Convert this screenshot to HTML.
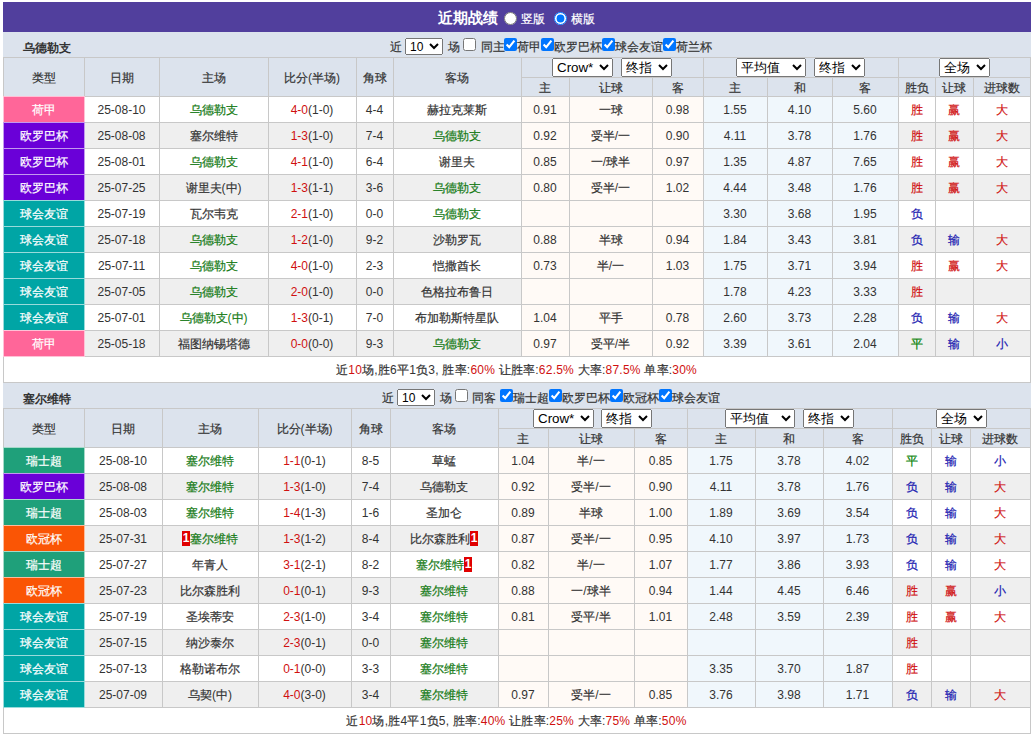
<!DOCTYPE html><html><head><meta charset="utf-8"><style>
html,body{margin:0;padding:0;background:#fff;}
body{width:1035px;height:734px;overflow:hidden;position:relative;font-family:'Liberation Sans', sans-serif;font-size:12px;color:#333333;}
div,select,input{position:absolute;box-sizing:border-box;}
.t{text-align:center;white-space:nowrap;}
select{margin:0;font-family:'Liberation Sans', sans-serif;font-size:13.33px;color:#000;}
input{margin:0;width:13px;height:13px;}
.g{color:#147a14;}
.r{color:#d01010;}
.b{color:#1818b0;}
.rg{color:#008000;}
b.c{font-weight:inherit;-webkit-text-stroke:0.2px currentColor;}
.one{display:inline-block;width:8px;height:15px;line-height:15px;vertical-align:1px;background:#e00000;color:#fff;font-weight:bold;text-align:center;}
</style></head><body>
<div style="left:3px;top:2px;width:1028px;height:30px;background:#513f9d"></div>
<div style="left:3px;top:32px;width:1028px;height:25px;background:#dce3ed"></div>
<div class="t" style="left:22.5px;top:36px;width:100px;height:25px;line-height:25px;font-weight:bold;text-align:left">乌德勒支</div>
<div class="t" style="left:389.5px;top:35px;width:80px;height:25px;line-height:25px;text-align:left;width:auto"><b class="c">近</b></div>
<select style="left:405px;top:38px;width:38px;height:17px;font-size:12px;padding-bottom:1px"><option>10</option></select>
<div class="t" style="left:447.5px;top:35px;width:80px;height:25px;line-height:25px;text-align:left;width:auto"><b class="c">场</b></div>
<input type="checkbox" style="left:463px;top:38px">
<div class="t" style="left:480.5px;top:35px;width:80px;height:25px;line-height:25px;text-align:left;width:auto"><b class="c">同主</b></div>
<input type="checkbox" style="left:504px;top:38px" checked>
<div class="t" style="left:516.5px;top:35px;width:80px;height:25px;line-height:25px;text-align:left;width:auto"><b class="c">荷甲</b></div>
<input type="checkbox" style="left:541px;top:38px" checked>
<div class="t" style="left:553.5px;top:35px;width:80px;height:25px;line-height:25px;text-align:left;width:auto"><b class="c">欧罗巴杯</b></div>
<input type="checkbox" style="left:602px;top:38px" checked>
<div class="t" style="left:614.5px;top:35px;width:80px;height:25px;line-height:25px;text-align:left;width:auto"><b class="c">球会友谊</b></div>
<input type="checkbox" style="left:663px;top:38px" checked>
<div class="t" style="left:675.5px;top:35px;width:80px;height:25px;line-height:25px;text-align:left;width:auto"><b class="c">荷兰杯</b></div>
<div style="left:3px;top:57px;width:1028px;height:40px;background:#dce3ed"></div>
<div style="left:3px;top:97px;width:1028px;height:25px;background:#ffffff"></div>
<div style="left:522px;top:97px;width:181px;height:25px;background:#fffaf6"></div>
<div style="left:704px;top:97px;width:194px;height:25px;background:#f0f7fc"></div>
<div style="left:4px;top:96px;width:81px;height:27px;background:#ff6699"></div>
<div style="left:3px;top:123px;width:1028px;height:25px;background:#efefef"></div>
<div style="left:522px;top:123px;width:181px;height:25px;background:#fffaf6"></div>
<div style="left:704px;top:123px;width:194px;height:25px;background:#f0f7fc"></div>
<div style="left:4px;top:122px;width:81px;height:27px;background:#6a00d8"></div>
<div style="left:3px;top:149px;width:1028px;height:25px;background:#ffffff"></div>
<div style="left:522px;top:149px;width:181px;height:25px;background:#fffaf6"></div>
<div style="left:704px;top:149px;width:194px;height:25px;background:#f0f7fc"></div>
<div style="left:4px;top:148px;width:81px;height:27px;background:#6a00d8"></div>
<div style="left:3px;top:175px;width:1028px;height:25px;background:#efefef"></div>
<div style="left:522px;top:175px;width:181px;height:25px;background:#fffaf6"></div>
<div style="left:704px;top:175px;width:194px;height:25px;background:#f0f7fc"></div>
<div style="left:4px;top:174px;width:81px;height:27px;background:#6a00d8"></div>
<div style="left:3px;top:201px;width:1028px;height:25px;background:#ffffff"></div>
<div style="left:522px;top:201px;width:181px;height:25px;background:#fffaf6"></div>
<div style="left:704px;top:201px;width:194px;height:25px;background:#f0f7fc"></div>
<div style="left:4px;top:200px;width:81px;height:27px;background:#00a5a5"></div>
<div style="left:3px;top:227px;width:1028px;height:25px;background:#efefef"></div>
<div style="left:522px;top:227px;width:181px;height:25px;background:#fffaf6"></div>
<div style="left:704px;top:227px;width:194px;height:25px;background:#f0f7fc"></div>
<div style="left:4px;top:226px;width:81px;height:27px;background:#00a5a5"></div>
<div style="left:3px;top:253px;width:1028px;height:25px;background:#ffffff"></div>
<div style="left:522px;top:253px;width:181px;height:25px;background:#fffaf6"></div>
<div style="left:704px;top:253px;width:194px;height:25px;background:#f0f7fc"></div>
<div style="left:4px;top:252px;width:81px;height:27px;background:#00a5a5"></div>
<div style="left:3px;top:279px;width:1028px;height:25px;background:#efefef"></div>
<div style="left:522px;top:279px;width:181px;height:25px;background:#fffaf6"></div>
<div style="left:704px;top:279px;width:194px;height:25px;background:#f0f7fc"></div>
<div style="left:4px;top:278px;width:81px;height:27px;background:#00a5a5"></div>
<div style="left:3px;top:305px;width:1028px;height:25px;background:#ffffff"></div>
<div style="left:522px;top:305px;width:181px;height:25px;background:#fffaf6"></div>
<div style="left:704px;top:305px;width:194px;height:25px;background:#f0f7fc"></div>
<div style="left:4px;top:304px;width:81px;height:27px;background:#00a5a5"></div>
<div style="left:3px;top:331px;width:1028px;height:25px;background:#efefef"></div>
<div style="left:522px;top:331px;width:181px;height:25px;background:#fffaf6"></div>
<div style="left:704px;top:331px;width:194px;height:25px;background:#f0f7fc"></div>
<div style="left:4px;top:330px;width:81px;height:27px;background:#ff6699"></div>
<div style="left:3px;top:57px;width:1028px;height:1px;background:#c8c8c8"></div>
<div style="left:3px;top:382px;width:1028px;height:1px;background:#c8c8c8"></div>
<div style="left:3px;top:96px;width:1028px;height:1px;background:#c8c8c8"></div>
<div style="left:521px;top:77px;width:509px;height:1px;background:#c8c8c8"></div>
<div style="left:3px;top:122px;width:1028px;height:1px;background:#c8c8c8"></div>
<div style="left:3px;top:148px;width:1028px;height:1px;background:#c8c8c8"></div>
<div style="left:3px;top:174px;width:1028px;height:1px;background:#c8c8c8"></div>
<div style="left:3px;top:200px;width:1028px;height:1px;background:#c8c8c8"></div>
<div style="left:3px;top:226px;width:1028px;height:1px;background:#c8c8c8"></div>
<div style="left:3px;top:252px;width:1028px;height:1px;background:#c8c8c8"></div>
<div style="left:3px;top:278px;width:1028px;height:1px;background:#c8c8c8"></div>
<div style="left:3px;top:304px;width:1028px;height:1px;background:#c8c8c8"></div>
<div style="left:3px;top:330px;width:1028px;height:1px;background:#c8c8c8"></div>
<div style="left:3px;top:356px;width:1028px;height:1px;background:#c8c8c8"></div>
<div style="left:3px;top:57px;width:1px;height:326px;background:#c8c8c8"></div>
<div style="left:84px;top:57px;width:1px;height:299px;background:#c8c8c8"></div>
<div style="left:159px;top:57px;width:1px;height:299px;background:#c8c8c8"></div>
<div style="left:268px;top:57px;width:1px;height:299px;background:#c8c8c8"></div>
<div style="left:356px;top:57px;width:1px;height:299px;background:#c8c8c8"></div>
<div style="left:393px;top:57px;width:1px;height:299px;background:#c8c8c8"></div>
<div style="left:521px;top:57px;width:1px;height:299px;background:#c8c8c8"></div>
<div style="left:569px;top:77px;width:1px;height:279px;background:#c8c8c8"></div>
<div style="left:652px;top:77px;width:1px;height:279px;background:#c8c8c8"></div>
<div style="left:703px;top:57px;width:1px;height:299px;background:#c8c8c8"></div>
<div style="left:767px;top:77px;width:1px;height:279px;background:#c8c8c8"></div>
<div style="left:832px;top:77px;width:1px;height:279px;background:#c8c8c8"></div>
<div style="left:898px;top:57px;width:1px;height:299px;background:#c8c8c8"></div>
<div style="left:935px;top:77px;width:1px;height:279px;background:#c8c8c8"></div>
<div style="left:973px;top:77px;width:1px;height:279px;background:#c8c8c8"></div>
<div style="left:1030px;top:57px;width:1px;height:326px;background:#c8c8c8"></div>
<div style="left:3px;top:96px;width:82px;height:1px;background:#ffc1d6"></div>
<div style="left:3px;top:96px;width:1px;height:27px;background:#ffc1d6"></div>
<div style="left:84px;top:96px;width:1px;height:27px;background:#ffc1d6"></div>
<div style="left:3px;top:122px;width:82px;height:1px;background:#c399ef"></div>
<div style="left:3px;top:122px;width:1px;height:27px;background:#c399ef"></div>
<div style="left:84px;top:122px;width:1px;height:27px;background:#c399ef"></div>
<div style="left:3px;top:148px;width:82px;height:1px;background:#c399ef"></div>
<div style="left:3px;top:148px;width:1px;height:27px;background:#c399ef"></div>
<div style="left:84px;top:148px;width:1px;height:27px;background:#c399ef"></div>
<div style="left:3px;top:174px;width:82px;height:1px;background:#c399ef"></div>
<div style="left:3px;top:174px;width:1px;height:27px;background:#c399ef"></div>
<div style="left:84px;top:174px;width:1px;height:27px;background:#c399ef"></div>
<div style="left:3px;top:200px;width:82px;height:1px;background:#99dbdb"></div>
<div style="left:3px;top:200px;width:1px;height:27px;background:#99dbdb"></div>
<div style="left:84px;top:200px;width:1px;height:27px;background:#99dbdb"></div>
<div style="left:3px;top:226px;width:82px;height:1px;background:#99dbdb"></div>
<div style="left:3px;top:226px;width:1px;height:27px;background:#99dbdb"></div>
<div style="left:84px;top:226px;width:1px;height:27px;background:#99dbdb"></div>
<div style="left:3px;top:252px;width:82px;height:1px;background:#99dbdb"></div>
<div style="left:3px;top:252px;width:1px;height:27px;background:#99dbdb"></div>
<div style="left:84px;top:252px;width:1px;height:27px;background:#99dbdb"></div>
<div style="left:3px;top:278px;width:82px;height:1px;background:#99dbdb"></div>
<div style="left:3px;top:278px;width:1px;height:27px;background:#99dbdb"></div>
<div style="left:84px;top:278px;width:1px;height:27px;background:#99dbdb"></div>
<div style="left:3px;top:304px;width:82px;height:1px;background:#99dbdb"></div>
<div style="left:3px;top:304px;width:1px;height:27px;background:#99dbdb"></div>
<div style="left:84px;top:304px;width:1px;height:27px;background:#99dbdb"></div>
<div style="left:3px;top:330px;width:82px;height:1px;background:#ffc1d6"></div>
<div style="left:3px;top:330px;width:1px;height:27px;background:#ffc1d6"></div>
<div style="left:84px;top:330px;width:1px;height:27px;background:#ffc1d6"></div>
<div style="left:3px;top:356px;width:82px;height:1px;background:#ffc1d6"></div>
<div class="t" style="left:3.5px;top:59px;width:80px;height:38px;line-height:38px;"><b class="c">类型</b></div>
<div class="t" style="left:84.5px;top:59px;width:74px;height:38px;line-height:38px;"><b class="c">日期</b></div>
<div class="t" style="left:159.5px;top:59px;width:108px;height:38px;line-height:38px;"><b class="c">主场</b></div>
<div class="t" style="left:268.5px;top:59px;width:87px;height:38px;line-height:38px;"><b class="c">比分</b>(<b class="c">半场</b>)</div>
<div class="t" style="left:356.5px;top:59px;width:36px;height:38px;line-height:38px;"><b class="c">角球</b></div>
<div class="t" style="left:393.5px;top:59px;width:127px;height:38px;line-height:38px;"><b class="c">客场</b></div>
<div class="t" style="left:521.5px;top:79px;width:47px;height:18px;line-height:18px;"><b class="c">主</b></div>
<div class="t" style="left:569.5px;top:79px;width:82px;height:18px;line-height:18px;"><b class="c">让球</b></div>
<div class="t" style="left:652.5px;top:79px;width:50px;height:18px;line-height:18px;"><b class="c">客</b></div>
<div class="t" style="left:703.5px;top:79px;width:63px;height:18px;line-height:18px;"><b class="c">主</b></div>
<div class="t" style="left:767.5px;top:79px;width:64px;height:18px;line-height:18px;"><b class="c">和</b></div>
<div class="t" style="left:832.5px;top:79px;width:65px;height:18px;line-height:18px;"><b class="c">客</b></div>
<div class="t" style="left:898.5px;top:79px;width:36px;height:18px;line-height:18px;"><b class="c">胜负</b></div>
<div class="t" style="left:935.5px;top:79px;width:37px;height:18px;line-height:18px;"><b class="c">让球</b></div>
<div class="t" style="left:973.5px;top:79px;width:56px;height:18px;line-height:18px;"><b class="c">进球数</b></div>
<div class="t" style="left:3.5px;top:98px;width:80px;height:25px;line-height:25px;color:#fff"><b class="c">荷甲</b></div>
<div class="t" style="left:84.5px;top:98px;width:74px;height:25px;line-height:25px;">25-08-10</div>
<div class="t" style="left:159.5px;top:98px;width:108px;height:25px;line-height:25px;"><span class="g"><b class="c">乌德勒支</b></span></div>
<div class="t" style="left:268.5px;top:98px;width:87px;height:25px;line-height:25px;"><span class="r">4-0</span>(1-0)</div>
<div class="t" style="left:356.5px;top:98px;width:36px;height:25px;line-height:25px;">4-4</div>
<div class="t" style="left:393.5px;top:98px;width:127px;height:25px;line-height:25px;"><b class="c">赫拉克莱斯</b></div>
<div class="t" style="left:521.5px;top:98px;width:47px;height:25px;line-height:25px;">0.91</div>
<div class="t" style="left:569.5px;top:98px;width:82px;height:25px;line-height:25px;"><b class="c">一球</b></div>
<div class="t" style="left:652.5px;top:98px;width:50px;height:25px;line-height:25px;">0.98</div>
<div class="t" style="left:703.5px;top:98px;width:63px;height:25px;line-height:25px;">1.55</div>
<div class="t" style="left:767.5px;top:98px;width:64px;height:25px;line-height:25px;">4.10</div>
<div class="t" style="left:832.5px;top:98px;width:65px;height:25px;line-height:25px;">5.60</div>
<div class="t" style="left:898.5px;top:98px;width:36px;height:25px;line-height:25px;"><span class="r"><b class="c">胜</b></span></div>
<div class="t" style="left:935.5px;top:98px;width:37px;height:25px;line-height:25px;"><span class="r"><b class="c">赢</b></span></div>
<div class="t" style="left:973.5px;top:98px;width:56px;height:25px;line-height:25px;"><span class="r"><b class="c">大</b></span></div>
<div class="t" style="left:3.5px;top:124px;width:80px;height:25px;line-height:25px;color:#fff"><b class="c">欧罗巴杯</b></div>
<div class="t" style="left:84.5px;top:124px;width:74px;height:25px;line-height:25px;">25-08-08</div>
<div class="t" style="left:159.5px;top:124px;width:108px;height:25px;line-height:25px;"><b class="c">塞尔维特</b></div>
<div class="t" style="left:268.5px;top:124px;width:87px;height:25px;line-height:25px;"><span class="r">1-3</span>(1-0)</div>
<div class="t" style="left:356.5px;top:124px;width:36px;height:25px;line-height:25px;">7-4</div>
<div class="t" style="left:393.5px;top:124px;width:127px;height:25px;line-height:25px;"><span class="g"><b class="c">乌德勒支</b></span></div>
<div class="t" style="left:521.5px;top:124px;width:47px;height:25px;line-height:25px;">0.92</div>
<div class="t" style="left:569.5px;top:124px;width:82px;height:25px;line-height:25px;"><b class="c">受半</b>/<b class="c">一</b></div>
<div class="t" style="left:652.5px;top:124px;width:50px;height:25px;line-height:25px;">0.90</div>
<div class="t" style="left:703.5px;top:124px;width:63px;height:25px;line-height:25px;">4.11</div>
<div class="t" style="left:767.5px;top:124px;width:64px;height:25px;line-height:25px;">3.78</div>
<div class="t" style="left:832.5px;top:124px;width:65px;height:25px;line-height:25px;">1.76</div>
<div class="t" style="left:898.5px;top:124px;width:36px;height:25px;line-height:25px;"><span class="r"><b class="c">胜</b></span></div>
<div class="t" style="left:935.5px;top:124px;width:37px;height:25px;line-height:25px;"><span class="r"><b class="c">赢</b></span></div>
<div class="t" style="left:973.5px;top:124px;width:56px;height:25px;line-height:25px;"><span class="r"><b class="c">大</b></span></div>
<div class="t" style="left:3.5px;top:150px;width:80px;height:25px;line-height:25px;color:#fff"><b class="c">欧罗巴杯</b></div>
<div class="t" style="left:84.5px;top:150px;width:74px;height:25px;line-height:25px;">25-08-01</div>
<div class="t" style="left:159.5px;top:150px;width:108px;height:25px;line-height:25px;"><span class="g"><b class="c">乌德勒支</b></span></div>
<div class="t" style="left:268.5px;top:150px;width:87px;height:25px;line-height:25px;"><span class="r">4-1</span>(1-0)</div>
<div class="t" style="left:356.5px;top:150px;width:36px;height:25px;line-height:25px;">6-4</div>
<div class="t" style="left:393.5px;top:150px;width:127px;height:25px;line-height:25px;"><b class="c">谢里夫</b></div>
<div class="t" style="left:521.5px;top:150px;width:47px;height:25px;line-height:25px;">0.85</div>
<div class="t" style="left:569.5px;top:150px;width:82px;height:25px;line-height:25px;"><b class="c">一</b>/<b class="c">球半</b></div>
<div class="t" style="left:652.5px;top:150px;width:50px;height:25px;line-height:25px;">0.97</div>
<div class="t" style="left:703.5px;top:150px;width:63px;height:25px;line-height:25px;">1.35</div>
<div class="t" style="left:767.5px;top:150px;width:64px;height:25px;line-height:25px;">4.87</div>
<div class="t" style="left:832.5px;top:150px;width:65px;height:25px;line-height:25px;">7.65</div>
<div class="t" style="left:898.5px;top:150px;width:36px;height:25px;line-height:25px;"><span class="r"><b class="c">胜</b></span></div>
<div class="t" style="left:935.5px;top:150px;width:37px;height:25px;line-height:25px;"><span class="r"><b class="c">赢</b></span></div>
<div class="t" style="left:973.5px;top:150px;width:56px;height:25px;line-height:25px;"><span class="r"><b class="c">大</b></span></div>
<div class="t" style="left:3.5px;top:176px;width:80px;height:25px;line-height:25px;color:#fff"><b class="c">欧罗巴杯</b></div>
<div class="t" style="left:84.5px;top:176px;width:74px;height:25px;line-height:25px;">25-07-25</div>
<div class="t" style="left:159.5px;top:176px;width:108px;height:25px;line-height:25px;"><b class="c">谢里夫</b>(<b class="c">中</b>)</div>
<div class="t" style="left:268.5px;top:176px;width:87px;height:25px;line-height:25px;"><span class="r">1-3</span>(1-1)</div>
<div class="t" style="left:356.5px;top:176px;width:36px;height:25px;line-height:25px;">3-6</div>
<div class="t" style="left:393.5px;top:176px;width:127px;height:25px;line-height:25px;"><span class="g"><b class="c">乌德勒支</b></span></div>
<div class="t" style="left:521.5px;top:176px;width:47px;height:25px;line-height:25px;">0.80</div>
<div class="t" style="left:569.5px;top:176px;width:82px;height:25px;line-height:25px;"><b class="c">受半</b>/<b class="c">一</b></div>
<div class="t" style="left:652.5px;top:176px;width:50px;height:25px;line-height:25px;">1.02</div>
<div class="t" style="left:703.5px;top:176px;width:63px;height:25px;line-height:25px;">4.44</div>
<div class="t" style="left:767.5px;top:176px;width:64px;height:25px;line-height:25px;">3.48</div>
<div class="t" style="left:832.5px;top:176px;width:65px;height:25px;line-height:25px;">1.76</div>
<div class="t" style="left:898.5px;top:176px;width:36px;height:25px;line-height:25px;"><span class="r"><b class="c">胜</b></span></div>
<div class="t" style="left:935.5px;top:176px;width:37px;height:25px;line-height:25px;"><span class="r"><b class="c">赢</b></span></div>
<div class="t" style="left:973.5px;top:176px;width:56px;height:25px;line-height:25px;"><span class="r"><b class="c">大</b></span></div>
<div class="t" style="left:3.5px;top:202px;width:80px;height:25px;line-height:25px;color:#fff"><b class="c">球会友谊</b></div>
<div class="t" style="left:84.5px;top:202px;width:74px;height:25px;line-height:25px;">25-07-19</div>
<div class="t" style="left:159.5px;top:202px;width:108px;height:25px;line-height:25px;"><b class="c">瓦尔韦克</b></div>
<div class="t" style="left:268.5px;top:202px;width:87px;height:25px;line-height:25px;"><span class="r">2-1</span>(1-0)</div>
<div class="t" style="left:356.5px;top:202px;width:36px;height:25px;line-height:25px;">0-0</div>
<div class="t" style="left:393.5px;top:202px;width:127px;height:25px;line-height:25px;"><span class="g"><b class="c">乌德勒支</b></span></div>
<div class="t" style="left:521.5px;top:202px;width:47px;height:25px;line-height:25px;"></div>
<div class="t" style="left:569.5px;top:202px;width:82px;height:25px;line-height:25px;"></div>
<div class="t" style="left:652.5px;top:202px;width:50px;height:25px;line-height:25px;"></div>
<div class="t" style="left:703.5px;top:202px;width:63px;height:25px;line-height:25px;">3.30</div>
<div class="t" style="left:767.5px;top:202px;width:64px;height:25px;line-height:25px;">3.68</div>
<div class="t" style="left:832.5px;top:202px;width:65px;height:25px;line-height:25px;">1.95</div>
<div class="t" style="left:898.5px;top:202px;width:36px;height:25px;line-height:25px;"><span class="b"><b class="c">负</b></span></div>
<div class="t" style="left:935.5px;top:202px;width:37px;height:25px;line-height:25px;"></div>
<div class="t" style="left:973.5px;top:202px;width:56px;height:25px;line-height:25px;"></div>
<div class="t" style="left:3.5px;top:228px;width:80px;height:25px;line-height:25px;color:#fff"><b class="c">球会友谊</b></div>
<div class="t" style="left:84.5px;top:228px;width:74px;height:25px;line-height:25px;">25-07-18</div>
<div class="t" style="left:159.5px;top:228px;width:108px;height:25px;line-height:25px;"><span class="g"><b class="c">乌德勒支</b></span></div>
<div class="t" style="left:268.5px;top:228px;width:87px;height:25px;line-height:25px;"><span class="r">1-2</span>(1-0)</div>
<div class="t" style="left:356.5px;top:228px;width:36px;height:25px;line-height:25px;">9-2</div>
<div class="t" style="left:393.5px;top:228px;width:127px;height:25px;line-height:25px;"><b class="c">沙勒罗瓦</b></div>
<div class="t" style="left:521.5px;top:228px;width:47px;height:25px;line-height:25px;">0.88</div>
<div class="t" style="left:569.5px;top:228px;width:82px;height:25px;line-height:25px;"><b class="c">半球</b></div>
<div class="t" style="left:652.5px;top:228px;width:50px;height:25px;line-height:25px;">0.94</div>
<div class="t" style="left:703.5px;top:228px;width:63px;height:25px;line-height:25px;">1.84</div>
<div class="t" style="left:767.5px;top:228px;width:64px;height:25px;line-height:25px;">3.43</div>
<div class="t" style="left:832.5px;top:228px;width:65px;height:25px;line-height:25px;">3.81</div>
<div class="t" style="left:898.5px;top:228px;width:36px;height:25px;line-height:25px;"><span class="b"><b class="c">负</b></span></div>
<div class="t" style="left:935.5px;top:228px;width:37px;height:25px;line-height:25px;"><span class="b"><b class="c">输</b></span></div>
<div class="t" style="left:973.5px;top:228px;width:56px;height:25px;line-height:25px;"><span class="r"><b class="c">大</b></span></div>
<div class="t" style="left:3.5px;top:254px;width:80px;height:25px;line-height:25px;color:#fff"><b class="c">球会友谊</b></div>
<div class="t" style="left:84.5px;top:254px;width:74px;height:25px;line-height:25px;">25-07-11</div>
<div class="t" style="left:159.5px;top:254px;width:108px;height:25px;line-height:25px;"><span class="g"><b class="c">乌德勒支</b></span></div>
<div class="t" style="left:268.5px;top:254px;width:87px;height:25px;line-height:25px;"><span class="r">4-0</span>(1-0)</div>
<div class="t" style="left:356.5px;top:254px;width:36px;height:25px;line-height:25px;">2-3</div>
<div class="t" style="left:393.5px;top:254px;width:127px;height:25px;line-height:25px;"><b class="c">恺撒酋长</b></div>
<div class="t" style="left:521.5px;top:254px;width:47px;height:25px;line-height:25px;">0.73</div>
<div class="t" style="left:569.5px;top:254px;width:82px;height:25px;line-height:25px;"><b class="c">半</b>/<b class="c">一</b></div>
<div class="t" style="left:652.5px;top:254px;width:50px;height:25px;line-height:25px;">1.03</div>
<div class="t" style="left:703.5px;top:254px;width:63px;height:25px;line-height:25px;">1.75</div>
<div class="t" style="left:767.5px;top:254px;width:64px;height:25px;line-height:25px;">3.71</div>
<div class="t" style="left:832.5px;top:254px;width:65px;height:25px;line-height:25px;">3.94</div>
<div class="t" style="left:898.5px;top:254px;width:36px;height:25px;line-height:25px;"><span class="r"><b class="c">胜</b></span></div>
<div class="t" style="left:935.5px;top:254px;width:37px;height:25px;line-height:25px;"><span class="r"><b class="c">赢</b></span></div>
<div class="t" style="left:973.5px;top:254px;width:56px;height:25px;line-height:25px;"><span class="r"><b class="c">大</b></span></div>
<div class="t" style="left:3.5px;top:280px;width:80px;height:25px;line-height:25px;color:#fff"><b class="c">球会友谊</b></div>
<div class="t" style="left:84.5px;top:280px;width:74px;height:25px;line-height:25px;">25-07-05</div>
<div class="t" style="left:159.5px;top:280px;width:108px;height:25px;line-height:25px;"><span class="g"><b class="c">乌德勒支</b></span></div>
<div class="t" style="left:268.5px;top:280px;width:87px;height:25px;line-height:25px;"><span class="r">2-0</span>(1-0)</div>
<div class="t" style="left:356.5px;top:280px;width:36px;height:25px;line-height:25px;">0-0</div>
<div class="t" style="left:393.5px;top:280px;width:127px;height:25px;line-height:25px;"><b class="c">色格拉布鲁日</b></div>
<div class="t" style="left:521.5px;top:280px;width:47px;height:25px;line-height:25px;"></div>
<div class="t" style="left:569.5px;top:280px;width:82px;height:25px;line-height:25px;"></div>
<div class="t" style="left:652.5px;top:280px;width:50px;height:25px;line-height:25px;"></div>
<div class="t" style="left:703.5px;top:280px;width:63px;height:25px;line-height:25px;">1.78</div>
<div class="t" style="left:767.5px;top:280px;width:64px;height:25px;line-height:25px;">4.23</div>
<div class="t" style="left:832.5px;top:280px;width:65px;height:25px;line-height:25px;">3.33</div>
<div class="t" style="left:898.5px;top:280px;width:36px;height:25px;line-height:25px;"><span class="r"><b class="c">胜</b></span></div>
<div class="t" style="left:935.5px;top:280px;width:37px;height:25px;line-height:25px;"></div>
<div class="t" style="left:973.5px;top:280px;width:56px;height:25px;line-height:25px;"></div>
<div class="t" style="left:3.5px;top:306px;width:80px;height:25px;line-height:25px;color:#fff"><b class="c">球会友谊</b></div>
<div class="t" style="left:84.5px;top:306px;width:74px;height:25px;line-height:25px;">25-07-01</div>
<div class="t" style="left:159.5px;top:306px;width:108px;height:25px;line-height:25px;"><span class="g"><b class="c">乌德勒支</b>(<b class="c">中</b>)</span></div>
<div class="t" style="left:268.5px;top:306px;width:87px;height:25px;line-height:25px;"><span class="r">1-3</span>(0-1)</div>
<div class="t" style="left:356.5px;top:306px;width:36px;height:25px;line-height:25px;">7-0</div>
<div class="t" style="left:393.5px;top:306px;width:127px;height:25px;line-height:25px;"><b class="c">布加勒斯特星队</b></div>
<div class="t" style="left:521.5px;top:306px;width:47px;height:25px;line-height:25px;">1.04</div>
<div class="t" style="left:569.5px;top:306px;width:82px;height:25px;line-height:25px;"><b class="c">平手</b></div>
<div class="t" style="left:652.5px;top:306px;width:50px;height:25px;line-height:25px;">0.78</div>
<div class="t" style="left:703.5px;top:306px;width:63px;height:25px;line-height:25px;">2.60</div>
<div class="t" style="left:767.5px;top:306px;width:64px;height:25px;line-height:25px;">3.73</div>
<div class="t" style="left:832.5px;top:306px;width:65px;height:25px;line-height:25px;">2.28</div>
<div class="t" style="left:898.5px;top:306px;width:36px;height:25px;line-height:25px;"><span class="b"><b class="c">负</b></span></div>
<div class="t" style="left:935.5px;top:306px;width:37px;height:25px;line-height:25px;"><span class="b"><b class="c">输</b></span></div>
<div class="t" style="left:973.5px;top:306px;width:56px;height:25px;line-height:25px;"><span class="r"><b class="c">大</b></span></div>
<div class="t" style="left:3.5px;top:332px;width:80px;height:25px;line-height:25px;color:#fff"><b class="c">荷甲</b></div>
<div class="t" style="left:84.5px;top:332px;width:74px;height:25px;line-height:25px;">25-05-18</div>
<div class="t" style="left:159.5px;top:332px;width:108px;height:25px;line-height:25px;"><b class="c">福图纳锡塔德</b></div>
<div class="t" style="left:268.5px;top:332px;width:87px;height:25px;line-height:25px;"><span class="r">0-0</span>(0-0)</div>
<div class="t" style="left:356.5px;top:332px;width:36px;height:25px;line-height:25px;">9-3</div>
<div class="t" style="left:393.5px;top:332px;width:127px;height:25px;line-height:25px;"><span class="g"><b class="c">乌德勒支</b></span></div>
<div class="t" style="left:521.5px;top:332px;width:47px;height:25px;line-height:25px;">0.97</div>
<div class="t" style="left:569.5px;top:332px;width:82px;height:25px;line-height:25px;"><b class="c">受平</b>/<b class="c">半</b></div>
<div class="t" style="left:652.5px;top:332px;width:50px;height:25px;line-height:25px;">0.92</div>
<div class="t" style="left:703.5px;top:332px;width:63px;height:25px;line-height:25px;">3.39</div>
<div class="t" style="left:767.5px;top:332px;width:64px;height:25px;line-height:25px;">3.61</div>
<div class="t" style="left:832.5px;top:332px;width:65px;height:25px;line-height:25px;">2.04</div>
<div class="t" style="left:898.5px;top:332px;width:36px;height:25px;line-height:25px;"><span class="rg"><b class="c">平</b></span></div>
<div class="t" style="left:935.5px;top:332px;width:37px;height:25px;line-height:25px;"><span class="b"><b class="c">输</b></span></div>
<div class="t" style="left:973.5px;top:332px;width:56px;height:25px;line-height:25px;"><span class="b"><b class="c">小</b></span></div>
<select style="left:552px;top:58px;width:61px;height:19px;"><option>Crow*</option></select>
<select style="left:621px;top:58px;width:51px;height:19px;"><option>终指</option></select>
<select style="left:736px;top:58px;width:70px;height:19px;"><option>平均值</option></select>
<select style="left:814px;top:58px;width:51px;height:19px;"><option>终指</option></select>
<select style="left:939px;top:58px;width:51px;height:19px;"><option>全场</option></select>
<div class="t" style="left:3.5px;top:358px;width:1026px;height:25px;line-height:25px;letter-spacing:0.22px"><b class="c">近</b><span class="r">10</span><b class="c">场</b>,<b class="c">胜</b>6<b class="c">平</b>1<b class="c">负</b>3, <b class="c">胜率</b>:<span class="r">60%</span> <b class="c">让胜率</b>:<span class="r">62.5%</span> <b class="c">大率</b>:<span class="r">87.5%</span> <b class="c">单率</b>:<span class="r">30%</span></div>
<div style="left:3px;top:383px;width:1028px;height:25px;background:#dce3ed"></div>
<div class="t" style="left:22.5px;top:387px;width:100px;height:25px;line-height:25px;font-weight:bold;text-align:left">塞尔维特</div>
<div class="t" style="left:381.5px;top:386px;width:80px;height:25px;line-height:25px;text-align:left;width:auto"><b class="c">近</b></div>
<select style="left:397px;top:389px;width:38px;height:17px;font-size:12px;padding-bottom:1px"><option>10</option></select>
<div class="t" style="left:439.5px;top:386px;width:80px;height:25px;line-height:25px;text-align:left;width:auto"><b class="c">场</b></div>
<input type="checkbox" style="left:455px;top:389px">
<div class="t" style="left:471.5px;top:386px;width:80px;height:25px;line-height:25px;text-align:left;width:auto"><b class="c">同客</b></div>
<input type="checkbox" style="left:500px;top:389px" checked>
<div class="t" style="left:512.5px;top:386px;width:80px;height:25px;line-height:25px;text-align:left;width:auto"><b class="c">瑞士超</b></div>
<input type="checkbox" style="left:549px;top:389px" checked>
<div class="t" style="left:561.5px;top:386px;width:80px;height:25px;line-height:25px;text-align:left;width:auto"><b class="c">欧罗巴杯</b></div>
<input type="checkbox" style="left:610px;top:389px" checked>
<div class="t" style="left:622.5px;top:386px;width:80px;height:25px;line-height:25px;text-align:left;width:auto"><b class="c">欧冠杯</b></div>
<input type="checkbox" style="left:659px;top:389px" checked>
<div class="t" style="left:671.5px;top:386px;width:80px;height:25px;line-height:25px;text-align:left;width:auto"><b class="c">球会友谊</b></div>
<div style="left:3px;top:408px;width:1028px;height:40px;background:#dce3ed"></div>
<div style="left:3px;top:448px;width:1028px;height:25px;background:#ffffff"></div>
<div style="left:499px;top:448px;width:188px;height:25px;background:#fffaf6"></div>
<div style="left:688px;top:448px;width:204px;height:25px;background:#f0f7fc"></div>
<div style="left:4px;top:447px;width:81px;height:27px;background:#1fa07a"></div>
<div style="left:3px;top:474px;width:1028px;height:25px;background:#efefef"></div>
<div style="left:499px;top:474px;width:188px;height:25px;background:#fffaf6"></div>
<div style="left:688px;top:474px;width:204px;height:25px;background:#f0f7fc"></div>
<div style="left:4px;top:473px;width:81px;height:27px;background:#6a00d8"></div>
<div style="left:3px;top:500px;width:1028px;height:25px;background:#ffffff"></div>
<div style="left:499px;top:500px;width:188px;height:25px;background:#fffaf6"></div>
<div style="left:688px;top:500px;width:204px;height:25px;background:#f0f7fc"></div>
<div style="left:4px;top:499px;width:81px;height:27px;background:#1fa07a"></div>
<div style="left:3px;top:526px;width:1028px;height:25px;background:#efefef"></div>
<div style="left:499px;top:526px;width:188px;height:25px;background:#fffaf6"></div>
<div style="left:688px;top:526px;width:204px;height:25px;background:#f0f7fc"></div>
<div style="left:4px;top:525px;width:81px;height:27px;background:#fa5505"></div>
<div style="left:3px;top:552px;width:1028px;height:25px;background:#ffffff"></div>
<div style="left:499px;top:552px;width:188px;height:25px;background:#fffaf6"></div>
<div style="left:688px;top:552px;width:204px;height:25px;background:#f0f7fc"></div>
<div style="left:4px;top:551px;width:81px;height:27px;background:#1fa07a"></div>
<div style="left:3px;top:578px;width:1028px;height:25px;background:#efefef"></div>
<div style="left:499px;top:578px;width:188px;height:25px;background:#fffaf6"></div>
<div style="left:688px;top:578px;width:204px;height:25px;background:#f0f7fc"></div>
<div style="left:4px;top:577px;width:81px;height:27px;background:#fa5505"></div>
<div style="left:3px;top:604px;width:1028px;height:25px;background:#ffffff"></div>
<div style="left:499px;top:604px;width:188px;height:25px;background:#fffaf6"></div>
<div style="left:688px;top:604px;width:204px;height:25px;background:#f0f7fc"></div>
<div style="left:4px;top:603px;width:81px;height:27px;background:#00a5a5"></div>
<div style="left:3px;top:630px;width:1028px;height:25px;background:#efefef"></div>
<div style="left:499px;top:630px;width:188px;height:25px;background:#fffaf6"></div>
<div style="left:688px;top:630px;width:204px;height:25px;background:#f0f7fc"></div>
<div style="left:4px;top:629px;width:81px;height:27px;background:#00a5a5"></div>
<div style="left:3px;top:656px;width:1028px;height:25px;background:#ffffff"></div>
<div style="left:499px;top:656px;width:188px;height:25px;background:#fffaf6"></div>
<div style="left:688px;top:656px;width:204px;height:25px;background:#f0f7fc"></div>
<div style="left:4px;top:655px;width:81px;height:27px;background:#00a5a5"></div>
<div style="left:3px;top:682px;width:1028px;height:25px;background:#efefef"></div>
<div style="left:499px;top:682px;width:188px;height:25px;background:#fffaf6"></div>
<div style="left:688px;top:682px;width:204px;height:25px;background:#f0f7fc"></div>
<div style="left:4px;top:681px;width:81px;height:27px;background:#00a5a5"></div>
<div style="left:3px;top:408px;width:1028px;height:1px;background:#c8c8c8"></div>
<div style="left:3px;top:733px;width:1028px;height:1px;background:#c8c8c8"></div>
<div style="left:3px;top:447px;width:1028px;height:1px;background:#c8c8c8"></div>
<div style="left:498px;top:428px;width:532px;height:1px;background:#c8c8c8"></div>
<div style="left:3px;top:473px;width:1028px;height:1px;background:#c8c8c8"></div>
<div style="left:3px;top:499px;width:1028px;height:1px;background:#c8c8c8"></div>
<div style="left:3px;top:525px;width:1028px;height:1px;background:#c8c8c8"></div>
<div style="left:3px;top:551px;width:1028px;height:1px;background:#c8c8c8"></div>
<div style="left:3px;top:577px;width:1028px;height:1px;background:#c8c8c8"></div>
<div style="left:3px;top:603px;width:1028px;height:1px;background:#c8c8c8"></div>
<div style="left:3px;top:629px;width:1028px;height:1px;background:#c8c8c8"></div>
<div style="left:3px;top:655px;width:1028px;height:1px;background:#c8c8c8"></div>
<div style="left:3px;top:681px;width:1028px;height:1px;background:#c8c8c8"></div>
<div style="left:3px;top:707px;width:1028px;height:1px;background:#c8c8c8"></div>
<div style="left:3px;top:408px;width:1px;height:326px;background:#c8c8c8"></div>
<div style="left:84px;top:408px;width:1px;height:299px;background:#c8c8c8"></div>
<div style="left:162px;top:408px;width:1px;height:299px;background:#c8c8c8"></div>
<div style="left:258px;top:408px;width:1px;height:299px;background:#c8c8c8"></div>
<div style="left:351px;top:408px;width:1px;height:299px;background:#c8c8c8"></div>
<div style="left:390px;top:408px;width:1px;height:299px;background:#c8c8c8"></div>
<div style="left:498px;top:408px;width:1px;height:299px;background:#c8c8c8"></div>
<div style="left:548px;top:428px;width:1px;height:279px;background:#c8c8c8"></div>
<div style="left:634px;top:428px;width:1px;height:279px;background:#c8c8c8"></div>
<div style="left:687px;top:408px;width:1px;height:299px;background:#c8c8c8"></div>
<div style="left:755px;top:428px;width:1px;height:279px;background:#c8c8c8"></div>
<div style="left:823px;top:428px;width:1px;height:279px;background:#c8c8c8"></div>
<div style="left:892px;top:408px;width:1px;height:299px;background:#c8c8c8"></div>
<div style="left:931px;top:428px;width:1px;height:279px;background:#c8c8c8"></div>
<div style="left:970px;top:428px;width:1px;height:279px;background:#c8c8c8"></div>
<div style="left:1030px;top:408px;width:1px;height:326px;background:#c8c8c8"></div>
<div style="left:3px;top:447px;width:82px;height:1px;background:#a5d9c9"></div>
<div style="left:3px;top:447px;width:1px;height:27px;background:#a5d9c9"></div>
<div style="left:84px;top:447px;width:1px;height:27px;background:#a5d9c9"></div>
<div style="left:3px;top:473px;width:82px;height:1px;background:#c399ef"></div>
<div style="left:3px;top:473px;width:1px;height:27px;background:#c399ef"></div>
<div style="left:84px;top:473px;width:1px;height:27px;background:#c399ef"></div>
<div style="left:3px;top:499px;width:82px;height:1px;background:#a5d9c9"></div>
<div style="left:3px;top:499px;width:1px;height:27px;background:#a5d9c9"></div>
<div style="left:84px;top:499px;width:1px;height:27px;background:#a5d9c9"></div>
<div style="left:3px;top:525px;width:82px;height:1px;background:#fdbb9b"></div>
<div style="left:3px;top:525px;width:1px;height:27px;background:#fdbb9b"></div>
<div style="left:84px;top:525px;width:1px;height:27px;background:#fdbb9b"></div>
<div style="left:3px;top:551px;width:82px;height:1px;background:#a5d9c9"></div>
<div style="left:3px;top:551px;width:1px;height:27px;background:#a5d9c9"></div>
<div style="left:84px;top:551px;width:1px;height:27px;background:#a5d9c9"></div>
<div style="left:3px;top:577px;width:82px;height:1px;background:#fdbb9b"></div>
<div style="left:3px;top:577px;width:1px;height:27px;background:#fdbb9b"></div>
<div style="left:84px;top:577px;width:1px;height:27px;background:#fdbb9b"></div>
<div style="left:3px;top:603px;width:82px;height:1px;background:#99dbdb"></div>
<div style="left:3px;top:603px;width:1px;height:27px;background:#99dbdb"></div>
<div style="left:84px;top:603px;width:1px;height:27px;background:#99dbdb"></div>
<div style="left:3px;top:629px;width:82px;height:1px;background:#99dbdb"></div>
<div style="left:3px;top:629px;width:1px;height:27px;background:#99dbdb"></div>
<div style="left:84px;top:629px;width:1px;height:27px;background:#99dbdb"></div>
<div style="left:3px;top:655px;width:82px;height:1px;background:#99dbdb"></div>
<div style="left:3px;top:655px;width:1px;height:27px;background:#99dbdb"></div>
<div style="left:84px;top:655px;width:1px;height:27px;background:#99dbdb"></div>
<div style="left:3px;top:681px;width:82px;height:1px;background:#99dbdb"></div>
<div style="left:3px;top:681px;width:1px;height:27px;background:#99dbdb"></div>
<div style="left:84px;top:681px;width:1px;height:27px;background:#99dbdb"></div>
<div style="left:3px;top:707px;width:82px;height:1px;background:#99dbdb"></div>
<div class="t" style="left:3.5px;top:410px;width:80px;height:38px;line-height:38px;"><b class="c">类型</b></div>
<div class="t" style="left:84.5px;top:410px;width:77px;height:38px;line-height:38px;"><b class="c">日期</b></div>
<div class="t" style="left:162.5px;top:410px;width:95px;height:38px;line-height:38px;"><b class="c">主场</b></div>
<div class="t" style="left:258.5px;top:410px;width:92px;height:38px;line-height:38px;"><b class="c">比分</b>(<b class="c">半场</b>)</div>
<div class="t" style="left:351.5px;top:410px;width:38px;height:38px;line-height:38px;"><b class="c">角球</b></div>
<div class="t" style="left:390.5px;top:410px;width:107px;height:38px;line-height:38px;"><b class="c">客场</b></div>
<div class="t" style="left:498.5px;top:430px;width:49px;height:18px;line-height:18px;"><b class="c">主</b></div>
<div class="t" style="left:548.5px;top:430px;width:85px;height:18px;line-height:18px;"><b class="c">让球</b></div>
<div class="t" style="left:634.5px;top:430px;width:52px;height:18px;line-height:18px;"><b class="c">客</b></div>
<div class="t" style="left:687.5px;top:430px;width:67px;height:18px;line-height:18px;"><b class="c">主</b></div>
<div class="t" style="left:755.5px;top:430px;width:67px;height:18px;line-height:18px;"><b class="c">和</b></div>
<div class="t" style="left:823.5px;top:430px;width:68px;height:18px;line-height:18px;"><b class="c">客</b></div>
<div class="t" style="left:892.5px;top:430px;width:38px;height:18px;line-height:18px;"><b class="c">胜负</b></div>
<div class="t" style="left:931.5px;top:430px;width:38px;height:18px;line-height:18px;"><b class="c">让球</b></div>
<div class="t" style="left:970.5px;top:430px;width:59px;height:18px;line-height:18px;"><b class="c">进球数</b></div>
<div class="t" style="left:3.5px;top:449px;width:80px;height:25px;line-height:25px;color:#fff"><b class="c">瑞士超</b></div>
<div class="t" style="left:84.5px;top:449px;width:77px;height:25px;line-height:25px;">25-08-10</div>
<div class="t" style="left:162.5px;top:449px;width:95px;height:25px;line-height:25px;"><span class="g"><b class="c">塞尔维特</b></span></div>
<div class="t" style="left:258.5px;top:449px;width:92px;height:25px;line-height:25px;"><span class="r">1-1</span>(0-1)</div>
<div class="t" style="left:351.5px;top:449px;width:38px;height:25px;line-height:25px;">8-5</div>
<div class="t" style="left:390.5px;top:449px;width:107px;height:25px;line-height:25px;"><b class="c">草蜢</b></div>
<div class="t" style="left:498.5px;top:449px;width:49px;height:25px;line-height:25px;">1.04</div>
<div class="t" style="left:548.5px;top:449px;width:85px;height:25px;line-height:25px;"><b class="c">半</b>/<b class="c">一</b></div>
<div class="t" style="left:634.5px;top:449px;width:52px;height:25px;line-height:25px;">0.85</div>
<div class="t" style="left:687.5px;top:449px;width:67px;height:25px;line-height:25px;">1.75</div>
<div class="t" style="left:755.5px;top:449px;width:67px;height:25px;line-height:25px;">3.78</div>
<div class="t" style="left:823.5px;top:449px;width:68px;height:25px;line-height:25px;">4.02</div>
<div class="t" style="left:892.5px;top:449px;width:38px;height:25px;line-height:25px;"><span class="rg"><b class="c">平</b></span></div>
<div class="t" style="left:931.5px;top:449px;width:38px;height:25px;line-height:25px;"><span class="b"><b class="c">输</b></span></div>
<div class="t" style="left:970.5px;top:449px;width:59px;height:25px;line-height:25px;"><span class="b"><b class="c">小</b></span></div>
<div class="t" style="left:3.5px;top:475px;width:80px;height:25px;line-height:25px;color:#fff"><b class="c">欧罗巴杯</b></div>
<div class="t" style="left:84.5px;top:475px;width:77px;height:25px;line-height:25px;">25-08-08</div>
<div class="t" style="left:162.5px;top:475px;width:95px;height:25px;line-height:25px;"><span class="g"><b class="c">塞尔维特</b></span></div>
<div class="t" style="left:258.5px;top:475px;width:92px;height:25px;line-height:25px;"><span class="r">1-3</span>(1-0)</div>
<div class="t" style="left:351.5px;top:475px;width:38px;height:25px;line-height:25px;">7-4</div>
<div class="t" style="left:390.5px;top:475px;width:107px;height:25px;line-height:25px;"><b class="c">乌德勒支</b></div>
<div class="t" style="left:498.5px;top:475px;width:49px;height:25px;line-height:25px;">0.92</div>
<div class="t" style="left:548.5px;top:475px;width:85px;height:25px;line-height:25px;"><b class="c">受半</b>/<b class="c">一</b></div>
<div class="t" style="left:634.5px;top:475px;width:52px;height:25px;line-height:25px;">0.90</div>
<div class="t" style="left:687.5px;top:475px;width:67px;height:25px;line-height:25px;">4.11</div>
<div class="t" style="left:755.5px;top:475px;width:67px;height:25px;line-height:25px;">3.78</div>
<div class="t" style="left:823.5px;top:475px;width:68px;height:25px;line-height:25px;">1.76</div>
<div class="t" style="left:892.5px;top:475px;width:38px;height:25px;line-height:25px;"><span class="b"><b class="c">负</b></span></div>
<div class="t" style="left:931.5px;top:475px;width:38px;height:25px;line-height:25px;"><span class="b"><b class="c">输</b></span></div>
<div class="t" style="left:970.5px;top:475px;width:59px;height:25px;line-height:25px;"><span class="r"><b class="c">大</b></span></div>
<div class="t" style="left:3.5px;top:501px;width:80px;height:25px;line-height:25px;color:#fff"><b class="c">瑞士超</b></div>
<div class="t" style="left:84.5px;top:501px;width:77px;height:25px;line-height:25px;">25-08-03</div>
<div class="t" style="left:162.5px;top:501px;width:95px;height:25px;line-height:25px;"><span class="g"><b class="c">塞尔维特</b></span></div>
<div class="t" style="left:258.5px;top:501px;width:92px;height:25px;line-height:25px;"><span class="r">1-4</span>(1-3)</div>
<div class="t" style="left:351.5px;top:501px;width:38px;height:25px;line-height:25px;">1-6</div>
<div class="t" style="left:390.5px;top:501px;width:107px;height:25px;line-height:25px;"><b class="c">圣加仑</b></div>
<div class="t" style="left:498.5px;top:501px;width:49px;height:25px;line-height:25px;">0.89</div>
<div class="t" style="left:548.5px;top:501px;width:85px;height:25px;line-height:25px;"><b class="c">半球</b></div>
<div class="t" style="left:634.5px;top:501px;width:52px;height:25px;line-height:25px;">1.00</div>
<div class="t" style="left:687.5px;top:501px;width:67px;height:25px;line-height:25px;">1.89</div>
<div class="t" style="left:755.5px;top:501px;width:67px;height:25px;line-height:25px;">3.69</div>
<div class="t" style="left:823.5px;top:501px;width:68px;height:25px;line-height:25px;">3.54</div>
<div class="t" style="left:892.5px;top:501px;width:38px;height:25px;line-height:25px;"><span class="b"><b class="c">负</b></span></div>
<div class="t" style="left:931.5px;top:501px;width:38px;height:25px;line-height:25px;"><span class="b"><b class="c">输</b></span></div>
<div class="t" style="left:970.5px;top:501px;width:59px;height:25px;line-height:25px;"><span class="r"><b class="c">大</b></span></div>
<div class="t" style="left:3.5px;top:527px;width:80px;height:25px;line-height:25px;color:#fff"><b class="c">欧冠杯</b></div>
<div class="t" style="left:84.5px;top:527px;width:77px;height:25px;line-height:25px;">25-07-31</div>
<div class="t" style="left:162.5px;top:527px;width:95px;height:25px;line-height:25px;"><span class="one">1</span><span class="g"><b class="c">塞尔维特</b></span></div>
<div class="t" style="left:258.5px;top:527px;width:92px;height:25px;line-height:25px;"><span class="r">1-3</span>(1-2)</div>
<div class="t" style="left:351.5px;top:527px;width:38px;height:25px;line-height:25px;">8-4</div>
<div class="t" style="left:390.5px;top:527px;width:107px;height:25px;line-height:25px;"><b class="c">比尔森胜利</b><span class="one">1</span></div>
<div class="t" style="left:498.5px;top:527px;width:49px;height:25px;line-height:25px;">0.87</div>
<div class="t" style="left:548.5px;top:527px;width:85px;height:25px;line-height:25px;"><b class="c">受半</b>/<b class="c">一</b></div>
<div class="t" style="left:634.5px;top:527px;width:52px;height:25px;line-height:25px;">0.95</div>
<div class="t" style="left:687.5px;top:527px;width:67px;height:25px;line-height:25px;">4.10</div>
<div class="t" style="left:755.5px;top:527px;width:67px;height:25px;line-height:25px;">3.97</div>
<div class="t" style="left:823.5px;top:527px;width:68px;height:25px;line-height:25px;">1.73</div>
<div class="t" style="left:892.5px;top:527px;width:38px;height:25px;line-height:25px;"><span class="b"><b class="c">负</b></span></div>
<div class="t" style="left:931.5px;top:527px;width:38px;height:25px;line-height:25px;"><span class="b"><b class="c">输</b></span></div>
<div class="t" style="left:970.5px;top:527px;width:59px;height:25px;line-height:25px;"><span class="r"><b class="c">大</b></span></div>
<div class="t" style="left:3.5px;top:553px;width:80px;height:25px;line-height:25px;color:#fff"><b class="c">瑞士超</b></div>
<div class="t" style="left:84.5px;top:553px;width:77px;height:25px;line-height:25px;">25-07-27</div>
<div class="t" style="left:162.5px;top:553px;width:95px;height:25px;line-height:25px;"><b class="c">年青人</b></div>
<div class="t" style="left:258.5px;top:553px;width:92px;height:25px;line-height:25px;"><span class="r">3-1</span>(2-1)</div>
<div class="t" style="left:351.5px;top:553px;width:38px;height:25px;line-height:25px;">8-2</div>
<div class="t" style="left:390.5px;top:553px;width:107px;height:25px;line-height:25px;"><span class="g"><b class="c">塞尔维特</b></span><span class="one">1</span></div>
<div class="t" style="left:498.5px;top:553px;width:49px;height:25px;line-height:25px;">0.82</div>
<div class="t" style="left:548.5px;top:553px;width:85px;height:25px;line-height:25px;"><b class="c">半</b>/<b class="c">一</b></div>
<div class="t" style="left:634.5px;top:553px;width:52px;height:25px;line-height:25px;">1.07</div>
<div class="t" style="left:687.5px;top:553px;width:67px;height:25px;line-height:25px;">1.77</div>
<div class="t" style="left:755.5px;top:553px;width:67px;height:25px;line-height:25px;">3.86</div>
<div class="t" style="left:823.5px;top:553px;width:68px;height:25px;line-height:25px;">3.93</div>
<div class="t" style="left:892.5px;top:553px;width:38px;height:25px;line-height:25px;"><span class="b"><b class="c">负</b></span></div>
<div class="t" style="left:931.5px;top:553px;width:38px;height:25px;line-height:25px;"><span class="b"><b class="c">输</b></span></div>
<div class="t" style="left:970.5px;top:553px;width:59px;height:25px;line-height:25px;"><span class="r"><b class="c">大</b></span></div>
<div class="t" style="left:3.5px;top:579px;width:80px;height:25px;line-height:25px;color:#fff"><b class="c">欧冠杯</b></div>
<div class="t" style="left:84.5px;top:579px;width:77px;height:25px;line-height:25px;">25-07-23</div>
<div class="t" style="left:162.5px;top:579px;width:95px;height:25px;line-height:25px;"><b class="c">比尔森胜利</b></div>
<div class="t" style="left:258.5px;top:579px;width:92px;height:25px;line-height:25px;"><span class="r">0-1</span>(0-1)</div>
<div class="t" style="left:351.5px;top:579px;width:38px;height:25px;line-height:25px;">9-3</div>
<div class="t" style="left:390.5px;top:579px;width:107px;height:25px;line-height:25px;"><span class="g"><b class="c">塞尔维特</b></span></div>
<div class="t" style="left:498.5px;top:579px;width:49px;height:25px;line-height:25px;">0.88</div>
<div class="t" style="left:548.5px;top:579px;width:85px;height:25px;line-height:25px;"><b class="c">一</b>/<b class="c">球半</b></div>
<div class="t" style="left:634.5px;top:579px;width:52px;height:25px;line-height:25px;">0.94</div>
<div class="t" style="left:687.5px;top:579px;width:67px;height:25px;line-height:25px;">1.44</div>
<div class="t" style="left:755.5px;top:579px;width:67px;height:25px;line-height:25px;">4.45</div>
<div class="t" style="left:823.5px;top:579px;width:68px;height:25px;line-height:25px;">6.46</div>
<div class="t" style="left:892.5px;top:579px;width:38px;height:25px;line-height:25px;"><span class="r"><b class="c">胜</b></span></div>
<div class="t" style="left:931.5px;top:579px;width:38px;height:25px;line-height:25px;"><span class="r"><b class="c">赢</b></span></div>
<div class="t" style="left:970.5px;top:579px;width:59px;height:25px;line-height:25px;"><span class="b"><b class="c">小</b></span></div>
<div class="t" style="left:3.5px;top:605px;width:80px;height:25px;line-height:25px;color:#fff"><b class="c">球会友谊</b></div>
<div class="t" style="left:84.5px;top:605px;width:77px;height:25px;line-height:25px;">25-07-19</div>
<div class="t" style="left:162.5px;top:605px;width:95px;height:25px;line-height:25px;"><b class="c">圣埃蒂安</b></div>
<div class="t" style="left:258.5px;top:605px;width:92px;height:25px;line-height:25px;"><span class="r">2-3</span>(1-0)</div>
<div class="t" style="left:351.5px;top:605px;width:38px;height:25px;line-height:25px;">3-4</div>
<div class="t" style="left:390.5px;top:605px;width:107px;height:25px;line-height:25px;"><span class="g"><b class="c">塞尔维特</b></span></div>
<div class="t" style="left:498.5px;top:605px;width:49px;height:25px;line-height:25px;">0.81</div>
<div class="t" style="left:548.5px;top:605px;width:85px;height:25px;line-height:25px;"><b class="c">受平</b>/<b class="c">半</b></div>
<div class="t" style="left:634.5px;top:605px;width:52px;height:25px;line-height:25px;">1.01</div>
<div class="t" style="left:687.5px;top:605px;width:67px;height:25px;line-height:25px;">2.48</div>
<div class="t" style="left:755.5px;top:605px;width:67px;height:25px;line-height:25px;">3.59</div>
<div class="t" style="left:823.5px;top:605px;width:68px;height:25px;line-height:25px;">2.39</div>
<div class="t" style="left:892.5px;top:605px;width:38px;height:25px;line-height:25px;"><span class="r"><b class="c">胜</b></span></div>
<div class="t" style="left:931.5px;top:605px;width:38px;height:25px;line-height:25px;"><span class="r"><b class="c">赢</b></span></div>
<div class="t" style="left:970.5px;top:605px;width:59px;height:25px;line-height:25px;"><span class="r"><b class="c">大</b></span></div>
<div class="t" style="left:3.5px;top:631px;width:80px;height:25px;line-height:25px;color:#fff"><b class="c">球会友谊</b></div>
<div class="t" style="left:84.5px;top:631px;width:77px;height:25px;line-height:25px;">25-07-15</div>
<div class="t" style="left:162.5px;top:631px;width:95px;height:25px;line-height:25px;"><b class="c">纳沙泰尔</b></div>
<div class="t" style="left:258.5px;top:631px;width:92px;height:25px;line-height:25px;"><span class="r">2-3</span>(0-1)</div>
<div class="t" style="left:351.5px;top:631px;width:38px;height:25px;line-height:25px;">0-0</div>
<div class="t" style="left:390.5px;top:631px;width:107px;height:25px;line-height:25px;"><span class="g"><b class="c">塞尔维特</b></span></div>
<div class="t" style="left:498.5px;top:631px;width:49px;height:25px;line-height:25px;"></div>
<div class="t" style="left:548.5px;top:631px;width:85px;height:25px;line-height:25px;"></div>
<div class="t" style="left:634.5px;top:631px;width:52px;height:25px;line-height:25px;"></div>
<div class="t" style="left:687.5px;top:631px;width:67px;height:25px;line-height:25px;"></div>
<div class="t" style="left:755.5px;top:631px;width:67px;height:25px;line-height:25px;"></div>
<div class="t" style="left:823.5px;top:631px;width:68px;height:25px;line-height:25px;"></div>
<div class="t" style="left:892.5px;top:631px;width:38px;height:25px;line-height:25px;"><span class="r"><b class="c">胜</b></span></div>
<div class="t" style="left:931.5px;top:631px;width:38px;height:25px;line-height:25px;"></div>
<div class="t" style="left:970.5px;top:631px;width:59px;height:25px;line-height:25px;"></div>
<div class="t" style="left:3.5px;top:657px;width:80px;height:25px;line-height:25px;color:#fff"><b class="c">球会友谊</b></div>
<div class="t" style="left:84.5px;top:657px;width:77px;height:25px;line-height:25px;">25-07-13</div>
<div class="t" style="left:162.5px;top:657px;width:95px;height:25px;line-height:25px;"><b class="c">格勒诺布尔</b></div>
<div class="t" style="left:258.5px;top:657px;width:92px;height:25px;line-height:25px;"><span class="r">0-1</span>(0-0)</div>
<div class="t" style="left:351.5px;top:657px;width:38px;height:25px;line-height:25px;">3-3</div>
<div class="t" style="left:390.5px;top:657px;width:107px;height:25px;line-height:25px;"><span class="g"><b class="c">塞尔维特</b></span></div>
<div class="t" style="left:498.5px;top:657px;width:49px;height:25px;line-height:25px;"></div>
<div class="t" style="left:548.5px;top:657px;width:85px;height:25px;line-height:25px;"></div>
<div class="t" style="left:634.5px;top:657px;width:52px;height:25px;line-height:25px;"></div>
<div class="t" style="left:687.5px;top:657px;width:67px;height:25px;line-height:25px;">3.35</div>
<div class="t" style="left:755.5px;top:657px;width:67px;height:25px;line-height:25px;">3.70</div>
<div class="t" style="left:823.5px;top:657px;width:68px;height:25px;line-height:25px;">1.87</div>
<div class="t" style="left:892.5px;top:657px;width:38px;height:25px;line-height:25px;"><span class="r"><b class="c">胜</b></span></div>
<div class="t" style="left:931.5px;top:657px;width:38px;height:25px;line-height:25px;"></div>
<div class="t" style="left:970.5px;top:657px;width:59px;height:25px;line-height:25px;"></div>
<div class="t" style="left:3.5px;top:683px;width:80px;height:25px;line-height:25px;color:#fff"><b class="c">球会友谊</b></div>
<div class="t" style="left:84.5px;top:683px;width:77px;height:25px;line-height:25px;">25-07-09</div>
<div class="t" style="left:162.5px;top:683px;width:95px;height:25px;line-height:25px;"><b class="c">乌契</b>(<b class="c">中</b>)</div>
<div class="t" style="left:258.5px;top:683px;width:92px;height:25px;line-height:25px;"><span class="r">4-0</span>(3-0)</div>
<div class="t" style="left:351.5px;top:683px;width:38px;height:25px;line-height:25px;">3-4</div>
<div class="t" style="left:390.5px;top:683px;width:107px;height:25px;line-height:25px;"><span class="g"><b class="c">塞尔维特</b></span></div>
<div class="t" style="left:498.5px;top:683px;width:49px;height:25px;line-height:25px;">0.97</div>
<div class="t" style="left:548.5px;top:683px;width:85px;height:25px;line-height:25px;"><b class="c">受半</b>/<b class="c">一</b></div>
<div class="t" style="left:634.5px;top:683px;width:52px;height:25px;line-height:25px;">0.85</div>
<div class="t" style="left:687.5px;top:683px;width:67px;height:25px;line-height:25px;">3.76</div>
<div class="t" style="left:755.5px;top:683px;width:67px;height:25px;line-height:25px;">3.98</div>
<div class="t" style="left:823.5px;top:683px;width:68px;height:25px;line-height:25px;">1.71</div>
<div class="t" style="left:892.5px;top:683px;width:38px;height:25px;line-height:25px;"><span class="b"><b class="c">负</b></span></div>
<div class="t" style="left:931.5px;top:683px;width:38px;height:25px;line-height:25px;"><span class="b"><b class="c">输</b></span></div>
<div class="t" style="left:970.5px;top:683px;width:59px;height:25px;line-height:25px;"><span class="r"><b class="c">大</b></span></div>
<select style="left:533px;top:409px;width:61px;height:19px;"><option>Crow*</option></select>
<select style="left:601px;top:409px;width:51px;height:19px;"><option>终指</option></select>
<select style="left:725px;top:409px;width:70px;height:19px;"><option>平均值</option></select>
<select style="left:803px;top:409px;width:51px;height:19px;"><option>终指</option></select>
<select style="left:936px;top:409px;width:51px;height:19px;"><option>全场</option></select>
<div class="t" style="left:3.5px;top:709px;width:1026px;height:25px;line-height:25px;letter-spacing:0.22px"><b class="c">近</b><span class="r">10</span><b class="c">场</b>,<b class="c">胜</b>4<b class="c">平</b>1<b class="c">负</b>5, <b class="c">胜率</b>:<span class="r">40%</span> <b class="c">让胜率</b>:<span class="r">25%</span> <b class="c">大率</b>:<span class="r">75%</span> <b class="c">单率</b>:<span class="r">50%</span></div>
<div class="t" style="left:437.5px;top:3px;width:62px;height:30px;line-height:30px;color:#fff;font-weight:bold;font-size:15px;text-align:left;width:auto">近期战绩</div>
<input type="radio" name="v" style="left:504px;top:12px;background:#fff">
<div class="t" style="left:520.5px;top:4px;width:30px;height:30px;line-height:30px;color:#fff;text-align:left"><b class="c">竖版</b></div>
<input type="radio" name="v" checked style="left:554px;top:12px">
<div class="t" style="left:570.5px;top:4px;width:30px;height:30px;line-height:30px;color:#fff;text-align:left"><b class="c">横版</b></div>
</body></html>
